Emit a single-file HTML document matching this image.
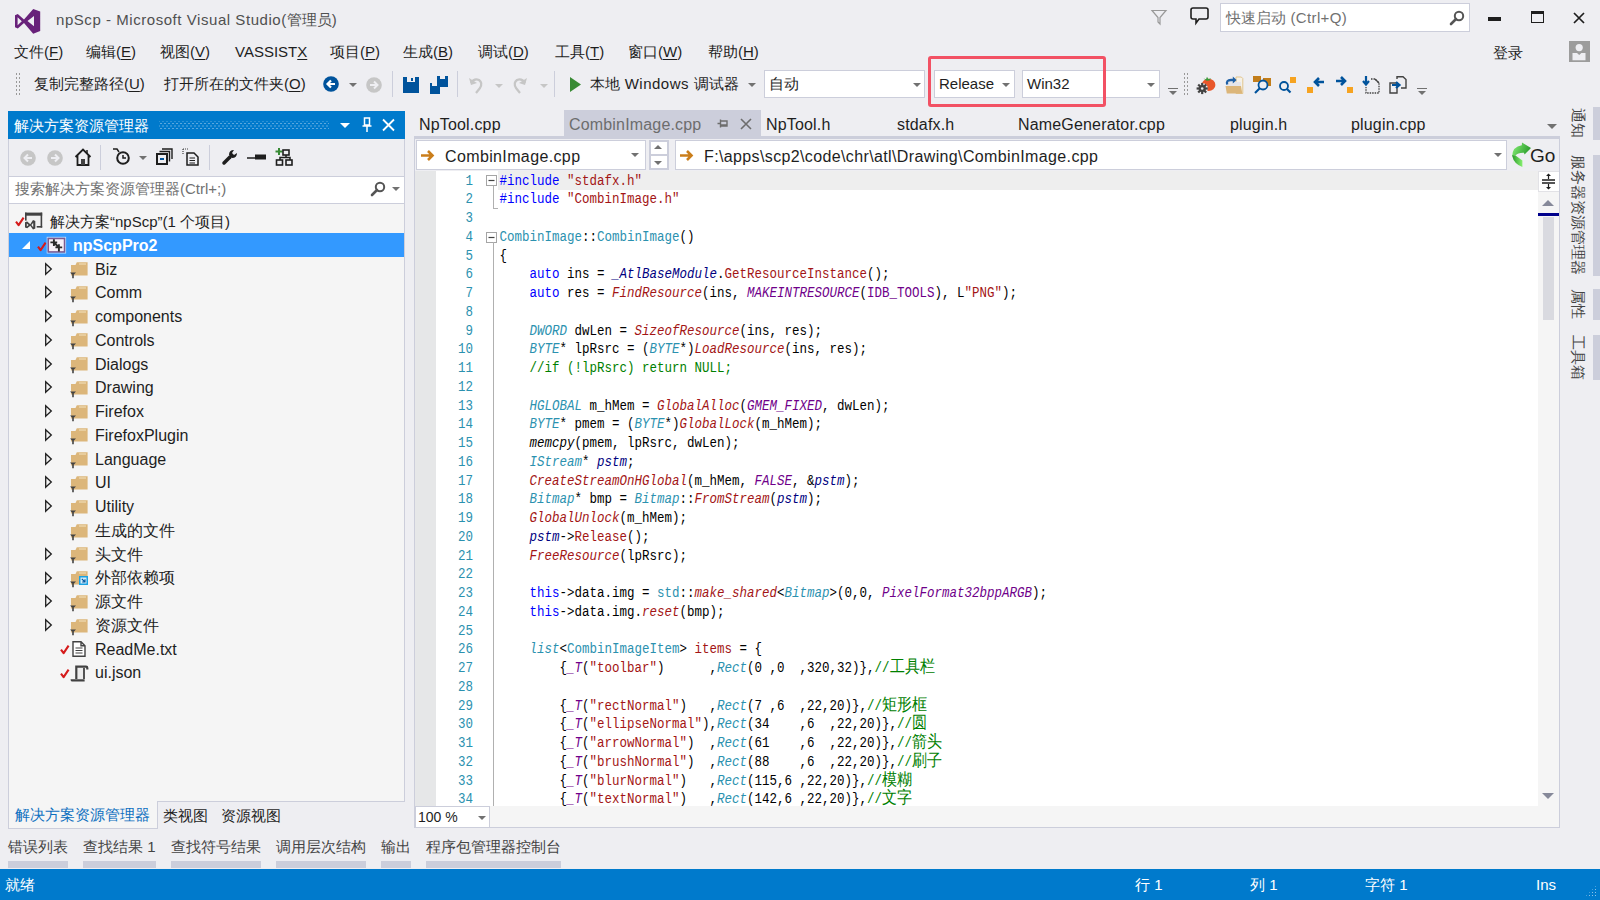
<!DOCTYPE html>
<html><head><meta charset="utf-8">
<style>
*{margin:0;padding:0;box-sizing:border-box}
html,body{width:1600px;height:900px;overflow:hidden;background:#EEEEF2;font-family:"Liberation Sans",sans-serif;color:#1E1E1E}
.a{position:absolute;white-space:nowrap}
.m{position:absolute;top:42px;font-size:15px;line-height:20px;white-space:nowrap}
.u{text-decoration:underline;text-underline-offset:2px}
.tb{position:absolute;top:74px;font-size:15px;line-height:20px;white-space:nowrap}
.sep{position:absolute;width:1px;background:#CCCEDB}
.dd{position:absolute;width:0;height:0;border-left:4px solid transparent;border-right:4px solid transparent;border-top:4px solid #717171}
.grip{position:absolute;width:6px;background-image:radial-gradient(circle,#999 0.8px,transparent 1px);background-size:3px 4px}
.box{position:absolute;background:#fff;border:1px solid #CCCEDB}
svg{position:absolute;overflow:visible}
</style><style>
.tr{position:absolute;font-size:16px;line-height:23.76px;white-space:nowrap;color:#1E1E1E}
.dt{top:114.5px;font-size:16px;letter-spacing:0.17px;line-height:20px;color:#1E1E1E}
.nv{top:146.5px;font-size:16px;letter-spacing:0.37px;line-height:20px;color:#1E1E1E}
.vt{writing-mode:vertical-rl;text-orientation:sideways;font-size:15px;line-height:20px;color:#444}
.ln{left:436px;top:170.6px;width:37px;text-align:right;font-family:"Liberation Mono",monospace;font-size:12.5px;line-height:18.755px;color:#2B91AF}
.code{left:499.5px;top:170.6px;font-family:"Liberation Mono",monospace;font-size:12.5px;line-height:18.755px;color:#000}
.cl{position:relative;height:18.755px;white-space:pre;transform:translateY(0.6px) scaleY(1.13);transform-origin:0 3px}
.ln div{height:18.755px;transform:translateY(0.6px) scaleY(1.13);transform-origin:0 3px}
.cj{font-weight:normal;font-size:15px;font-family:"Liberation Sans",sans-serif}
.code i{position:absolute;top:0;font-style:normal}
.code i.cj{line-height:14.95px;top:0}
.w{display:inline-block;inline-size:1em;text-align:center;font-weight:inherit;text-decoration:inherit}
.k{color:#0000FF}.s{color:#A31515}.t{color:#2B91AF}.ti{color:#2B91AF;font-style:italic!important}
.f{color:#A31515;font-style:italic!important}.fr{color:#A31515}.mc{color:#6F008A;font-style:italic!important}.mr{color:#6F008A}
.vi{color:#000080;font-style:italic!important}.c{color:#008000}.ni{font-style:italic!important}
</style>
</head><body>
<!-- ===== title bar ===== -->
<svg style="left:0;top:0" width="50" height="40" viewBox="0 0 50 40"><path d="M15 15.2 L17.8 14 L24 19.5 L33.2 9 L40.2 11.6 V31 L33.2 33.8 L24 23 L17.8 28.5 L15 27.2 Z M17.6 17.2 V25.2 L21.8 21.2 Z M34 16 V26.2 L27.5 21.1 Z" fill="#68217A" fill-rule="evenodd"/></svg>
<div class="a" style="left:56px;top:10px;font-size:15px;line-height:20px;color:#505050;letter-spacing:0.55px">npScp - Microsoft Visual Studio(<b class="w">管</b><b class="w">理</b><b class="w">员</b>)</div>
<svg style="left:1151px;top:9px" width="16" height="16" viewBox="0 0 16 16"><path d="M1 1.5 L15 1.5 L9 8.5 L9 15 L7 13 L7 8.5 Z" fill="none" stroke="#999" stroke-width="1.2"/></svg>
<svg style="left:1190px;top:7px" width="19" height="18" viewBox="0 0 19 18"><path d="M3 1 H16 Q18 1 18 3 V10 Q18 12 16 12 H9 L6 16 V12 H3 Q1 12 1 10 V3 Q1 1 3 1 Z" fill="none" stroke="#1E1E1E" stroke-width="1.6"/></svg>
<div class="box" style="left:1220px;top:3px;width:250px;height:29px"></div>
<div class="a" style="left:1226px;top:8px;font-size:15px;line-height:20px;color:#717171;letter-spacing:0.35px"><b class="w">快</b><b class="w">速</b><b class="w">启</b><b class="w">动</b> (Ctrl+Q)</div>
<svg style="left:1449px;top:10px" width="16" height="16" viewBox="0 0 16 16"><circle cx="10" cy="6" r="4.2" fill="none" stroke="#555" stroke-width="2"/><path d="M7 9 L2 14" stroke="#555" stroke-width="2.6" stroke-linecap="round"/></svg>
<div class="a" style="left:1488px;top:17px;width:13px;height:4px;background:#1E1E1E"></div>
<div class="a" style="left:1531px;top:11px;width:13px;height:12px;border:1.5px solid #1E1E1E;border-top-width:3px"></div>
<svg style="left:1573px;top:12px" width="12" height="12" viewBox="0 0 12 12"><path d="M1 1 L11 11 M11 1 L1 11" stroke="#1E1E1E" stroke-width="1.7"/></svg>
<!-- ===== menu ===== -->
<div class="m" style="left:14px"><b class="w">文</b><b class="w">件</b>(<span class="u">F</span>)</div>
<div class="m" style="left:86px"><b class="w">编</b><b class="w">辑</b>(<span class="u">E</span>)</div>
<div class="m" style="left:160px"><b class="w">视</b><b class="w">图</b>(<span class="u">V</span>)</div>
<div class="m" style="left:235px">VASSIST<span class="u">X</span></div>
<div class="m" style="left:330px"><b class="w">项</b><b class="w">目</b>(<span class="u">P</span>)</div>
<div class="m" style="left:403px"><b class="w">生</b><b class="w">成</b>(<span class="u">B</span>)</div>
<div class="m" style="left:478px"><b class="w">调</b><b class="w">试</b>(<span class="u">D</span>)</div>
<div class="m" style="left:555px"><b class="w">工</b><b class="w">具</b>(<span class="u">T</span>)</div>
<div class="m" style="left:628px"><b class="w">窗</b><b class="w">口</b>(<span class="u">W</span>)</div>
<div class="m" style="left:708px"><b class="w">帮</b><b class="w">助</b>(<span class="u">H</span>)</div>
<div class="m" style="left:1493px;top:43px"><b class="w">登</b><b class="w">录</b></div>
<div class="a" style="left:1569px;top:41px;width:21px;height:21px;background:#9C9C9C"></div>
<svg style="left:1569px;top:41px" width="21" height="21" viewBox="0 0 21 21"><circle cx="10.2" cy="6.6" r="3.6" fill="#EEEEF2"/><path d="M3.5 12 H8 L10.2 14 L12.4 12 H16.5 V19.2 H3.5 Z" fill="#EEEEF2"/></svg>
<!-- ===== toolbar ===== -->
<div class="grip" style="left:15px;top:72px;height:25px"></div>
<div class="tb" style="left:34px"><b class="w">复</b><b class="w">制</b><b class="w">完</b><b class="w">整</b><b class="w">路</b><b class="w">径</b>(<span class="u">U</span>)</div>
<div class="tb" style="left:164px"><b class="w">打</b><b class="w">开</b><b class="w">所</b><b class="w">在</b><b class="w">的</b><b class="w">文</b><b class="w">件</b><b class="w">夹</b>(<span class="u">O</span>)</div>
<svg style="left:323px;top:76px" width="16" height="16" viewBox="0 0 16 16"><circle cx="8" cy="8" r="7.8" fill="#00539C"/><path d="M12 8 H5 M8 4.5 L4.5 8 L8 11.5" stroke="#fff" stroke-width="2.2" fill="none"/></svg>
<div class="dd" style="left:349px;top:83px"></div>
<svg style="left:366px;top:77px" width="16" height="16" viewBox="0 0 16 16"><circle cx="8" cy="8" r="7.8" fill="#C6C6C6"/><path d="M4 8 H11 M8 4.5 L11.5 8 L8 11.5" stroke="#EEEEF2" stroke-width="2" fill="none"/></svg>
<div class="sep" style="left:392px;top:71px;height:26px"></div>
<svg style="left:403px;top:77px" width="16" height="16" viewBox="0 0 16 16"><path d="M0 0 H16 V16 H0 Z" fill="#00539C"/><rect x="4" y="0" width="8" height="5" fill="#EEEEF2"/><rect x="8" y="1" width="2" height="3" fill="#00539C"/></svg>
<svg style="left:430px;top:76px" width="18" height="18" viewBox="0 0 18 18"><path d="M0 7 H10 V18 H0 Z" fill="#00539C"/><rect x="2" y="7" width="5" height="3" fill="#EEEEF2"/><path d="M7 0 H18 V11 H10 V7 H7 Z" fill="#00539C"/><rect x="10" y="0" width="5" height="3" fill="#EEEEF2"/></svg>
<div class="sep" style="left:457px;top:71px;height:26px"></div>
<svg style="left:468px;top:76px" width="16" height="18" viewBox="0 0 16 18"><path d="M3 7 Q6 2 11 4 Q15 7 12 12 L8 17" stroke="#C6C6C6" stroke-width="2.2" fill="none"/><path d="M1 2 L3 9 L9 7 Z" fill="#C6C6C6"/></svg>
<div class="dd" style="left:495px;top:84px;border-top-color:#C6C6C6"></div>
<svg style="left:512px;top:76px" width="16" height="18" viewBox="0 0 16 18"><path d="M13 7 Q10 2 5 4 Q1 7 4 12 L8 17" stroke="#C6C6C6" stroke-width="2.2" fill="none"/><path d="M15 2 L13 9 L7 7 Z" fill="#C6C6C6"/></svg>
<div class="dd" style="left:540px;top:84px;border-top-color:#C6C6C6"></div>
<div class="sep" style="left:554px;top:71px;height:26px"></div>
<svg style="left:570px;top:77px" width="11" height="15" viewBox="0 0 11 15"><path d="M0 0 L11 7.5 L0 15 Z" fill="#388A34"/></svg>
<div class="tb" style="left:590px;letter-spacing:0.5px"><b class="w">本</b><b class="w">地</b> Windows <b class="w">调</b><b class="w">试</b><b class="w">器</b></div>
<div class="dd" style="left:748px;top:83px"></div>
<div class="box" style="left:764px;top:70px;width:161px;height:28px"></div>
<div class="tb" style="left:769px"><b class="w">自</b><b class="w">动</b></div>
<div class="dd" style="left:913px;top:83px"></div>
<div class="box" style="left:934px;top:70px;width:81px;height:28px"></div>
<div class="tb" style="left:939px">Release</div>
<div class="dd" style="left:1002px;top:83px"></div>
<div class="box" style="left:1022px;top:70px;width:138px;height:28px"></div>
<div class="tb" style="left:1027px">Win32</div>
<div class="dd" style="left:1147px;top:83px"></div>
<div class="a" style="left:928px;top:56px;width:178px;height:51px;border:3px solid #F25164;border-radius:3px"></div>
<svg style="left:1168px;top:88px" width="10" height="8" viewBox="0 0 10 8"><path d="M0 0.5 H10" stroke="#717171" stroke-width="1"/><path d="M1 3 H9 L5 7 Z" fill="#717171"/></svg>
<div class="grip" style="left:1183px;top:72px;height:25px"></div>
<!-- right toolbar icons -->
<svg style="left:1197px;top:76px" width="20" height="18" viewBox="0 0 20 18"><ellipse cx="11.6" cy="8.9" rx="6.8" ry="6.1" fill="#E8562A"/><path d="M6.5 2.5 L9 3.2 L10 0.8 L11.3 3 L14 2.2 L12.5 4.6 L9.5 4.8 Z" fill="#3A9A3A"/><circle cx="5.2" cy="12.5" r="5.6" fill="#EEEEF2"/><rect x="4.1" y="6.9" width="2.2" height="3" fill="#424242" transform="rotate(0 5.2 12.5)"/><rect x="4.1" y="6.9" width="2.2" height="3" fill="#424242" transform="rotate(45 5.2 12.5)"/><rect x="4.1" y="6.9" width="2.2" height="3" fill="#424242" transform="rotate(90 5.2 12.5)"/><rect x="4.1" y="6.9" width="2.2" height="3" fill="#424242" transform="rotate(135 5.2 12.5)"/><rect x="4.1" y="6.9" width="2.2" height="3" fill="#424242" transform="rotate(180 5.2 12.5)"/><rect x="4.1" y="6.9" width="2.2" height="3" fill="#424242" transform="rotate(225 5.2 12.5)"/><rect x="4.1" y="6.9" width="2.2" height="3" fill="#424242" transform="rotate(270 5.2 12.5)"/><rect x="4.1" y="6.9" width="2.2" height="3" fill="#424242" transform="rotate(315 5.2 12.5)"/><circle cx="5.2" cy="12.5" r="3.6" fill="#424242"/><circle cx="5.2" cy="12.5" r="1.3" fill="#EEEEF2"/></svg>
<svg style="left:1225px;top:76px" width="19" height="18" viewBox="0 0 19 18"><path d="M11 1 H16.3 L17.8 2.5 V17.5 H11 Z" fill="#F6F1E7" stroke="#E2C58E" stroke-width="1"/><rect x="2" y="6" width="14" height="4.5" fill="#E6E6EA"/><path d="M0.5 10 H16 L17.3 17.5 H1.8 Z" fill="#DCB67A"/><path d="M2.2 8.5 Q0.8 4 6 4 H8.5" stroke="#1E5FA5" stroke-width="2.3" fill="none"/><path d="M7.8 0.6 L11.6 4 L7.8 7.4 Z" fill="#1E5FA5"/></svg>
<svg style="left:1253px;top:76px" width="18" height="18" viewBox="0 0 18 18"><rect x="0" y="0" width="8" height="6" fill="#C27D1A"/><rect x="10" y="2" width="8" height="8" fill="#C27D1A"/><circle cx="10" cy="9" r="4.5" fill="#EEEEF2" stroke="#00539C" stroke-width="1.8"/><path d="M7 12 L2 17" stroke="#00539C" stroke-width="2.2"/></svg>
<svg style="left:1278px;top:77px" width="18" height="17" viewBox="0 0 18 17"><rect x="12" y="0" width="6" height="6" fill="#F6A321"/><circle cx="6" cy="9" r="4" fill="none" stroke="#00539C" stroke-width="1.8"/><path d="M9 12 L12.5 15.5" stroke="#00539C" stroke-width="2.2"/></svg>
<svg style="left:1307px;top:76px" width="18" height="18" viewBox="0 0 18 18"><rect x="0" y="11" width="6" height="6" fill="#F6A321"/><path d="M17 6 H9 M12 2 L8 6 L12 10" stroke="#00539C" stroke-width="2.6" fill="none"/></svg>
<svg style="left:1335px;top:76px" width="18" height="18" viewBox="0 0 18 18"><rect x="12" y="11" width="6" height="6" fill="#F6A321"/><path d="M1 5 H9 M6 1 L10 5 L6 9" stroke="#00539C" stroke-width="2.6" fill="none"/></svg>
<svg style="left:1362px;top:76px" width="18" height="18" viewBox="0 0 18 18"><path d="M4 0 V8 M1 5 L4 8.5 L7 5" stroke="#00539C" stroke-width="2.2" fill="none"/><path d="M9 3 H13 L17 7 V17 H4 V11" fill="none" stroke="#424242" stroke-width="1.3" stroke-dasharray="1.5 1"/><path d="M13 3 L17 7" stroke="#424242" stroke-width="1.3"/></svg>
<svg style="left:1389px;top:76px" width="18" height="18" viewBox="0 0 18 18"><path d="M8 3 V0.7 H14 L17 3.5 V12 H12" fill="none" stroke="#424242" stroke-width="1.4"/><path d="M1 7 H8 V17 H1 Z" fill="none" stroke="#424242" stroke-width="1.4"/><path d="M3 9 H10 M7 6 L10.5 9 L7 12" stroke="#00539C" stroke-width="2.2" fill="none"/></svg>
<svg style="left:1417px;top:88px" width="10" height="8" viewBox="0 0 10 8"><path d="M0 0.5 H10" stroke="#717171" stroke-width="1"/><path d="M1 3 H9 L5 7 Z" fill="#717171"/></svg>

<!-- ===== left panel: solution explorer ===== -->
<div class="a" style="left:8px;top:111px;width:397px;height:691px;background:#F5F5F5;border:1px solid #CCCEDB;border-top:none"></div>
<div class="a" style="left:8px;top:111px;width:397px;height:28px;background:#007ACC"></div>
<div class="a" style="left:14px;top:116px;font-size:15px;line-height:20px;color:#fff"><b class="w">解</b><b class="w">决</b><b class="w">方</b><b class="w">案</b><b class="w">资</b><b class="w">源</b><b class="w">管</b><b class="w">理</b><b class="w">器</b></div>
<div class="a" style="left:159px;top:121px;width:170px;height:8px;background-image:radial-gradient(circle,#5AA7DE 0.75px,transparent 1.05px),radial-gradient(circle,#5AA7DE 0.75px,transparent 1.05px);background-size:4px 5px;background-position:0 0,2px 2.5px"></div>
<div class="dd" style="left:340px;top:123px;border-left-width:5px;border-right-width:5px;border-top:5px solid #fff"></div>
<svg style="left:362px;top:117px" width="10" height="16" viewBox="0 0 10 16"><path d="M2.5 1 H7.5 V8 H2.5 Z M0.5 9 H9.5 M5 9 V15" stroke="#fff" stroke-width="1.5" fill="none"/></svg>
<svg style="left:382px;top:119px" width="13" height="12" viewBox="0 0 13 12"><path d="M1 0.5 L12 11.5 M12 0.5 L1 11.5" stroke="#fff" stroke-width="1.8"/></svg>
<div class="a" style="left:9px;top:139px;width:395px;height:37px;background:#EEEEF2"></div>
<svg style="left:20px;top:150px" width="16" height="16" viewBox="0 0 16 16"><circle cx="8" cy="8" r="7.8" fill="#C6C6C6"/><path d="M12 8 H5 M8 4.5 L4.5 8 L8 11.5" stroke="#EEEEF2" stroke-width="2" fill="none"/></svg>
<svg style="left:47px;top:150px" width="16" height="16" viewBox="0 0 16 16"><circle cx="8" cy="8" r="7.8" fill="#C6C6C6"/><path d="M4 8 H11 M8 4.5 L11.5 8 L8 11.5" stroke="#EEEEF2" stroke-width="2" fill="none"/></svg>
<svg style="left:74px;top:148px" width="18" height="18" viewBox="0 0 18 18"><path d="M1.5 9 L9 1.5 L16.5 9 M3.5 7.5 V17 H14.5 V7.5" stroke="#1E1E1E" stroke-width="1.8" fill="none"/><rect x="7" y="11" width="4" height="6" fill="#424242"/><path d="M13 2 V5" stroke="#1E1E1E" stroke-width="1.5"/></svg>
<div class="sep" style="left:100px;top:145px;height:25px"></div>
<svg style="left:113px;top:148px" width="18" height="17" viewBox="0 0 18 17"><circle cx="10" cy="10" r="5.8" fill="none" stroke="#1E1E1E" stroke-width="2"/><path d="M10 7 V10 H13" stroke="#1E1E1E" stroke-width="1.5" fill="none"/><path d="M0 1 H4 L6 4" stroke="#1E1E1E" stroke-width="1.5" fill="none"/></svg>
<div class="dd" style="left:139px;top:156px"></div>
<svg style="left:156px;top:148px" width="17" height="17" viewBox="0 0 17 17"><path d="M6 1 H16 V11 M3.5 3.5 H13.5 V13.5" stroke="#1E1E1E" stroke-width="1.4" fill="none"/><rect x="1" y="6" width="10" height="10" fill="none" stroke="#1E1E1E" stroke-width="2"/><rect x="4" y="10" width="4" height="2" fill="#00539C"/></svg>
<svg style="left:182px;top:148px" width="18" height="18" viewBox="0 0 18 18"><path d="M1 1 V6 M1 1 H6" stroke="#424242" stroke-width="1.2" stroke-dasharray="1 1" fill="none"/><path d="M5 5 H12 L16 9 V17 H5 Z" fill="none" stroke="#1E1E1E" stroke-width="1.5"/><path d="M7.5 10 H13 M7.5 12.5 H13 M7.5 15 H13" stroke="#1E1E1E" stroke-width="1.2"/></svg>
<div class="sep" style="left:209px;top:145px;height:25px"></div>
<svg style="left:222px;top:149px" width="16" height="16" viewBox="0 0 16 16"><path d="M2 14 L8 8" stroke="#1E1E1E" stroke-width="3.5" stroke-linecap="round"/><path d="M7 6 Q7 1 12 1 L10 4 L12 6 L15 4 Q15 9 10 9 Z" fill="#1E1E1E"/></svg>
<svg style="left:247px;top:154px" width="19" height="7" viewBox="0 0 19 7"><path d="M0 4 H19" stroke="#1E1E1E" stroke-width="1.5"/><rect x="8" y="0.5" width="11" height="5" fill="#1E1E1E"/></svg>
<svg style="left:275px;top:148px" width="18" height="18" viewBox="0 0 18 18"><path d="M4 0 V7 M0.5 3.5 H7.5" stroke="#388A34" stroke-width="2"/><rect x="8" y="2" width="6" height="5" fill="none" stroke="#1E1E1E" stroke-width="1.6"/><path d="M11 7 V9.5 M5 12 V9.5 H15 V12" stroke="#1E1E1E" stroke-width="1.5" fill="none"/><rect x="1.5" y="12" width="6" height="5" fill="none" stroke="#1E1E1E" stroke-width="1.6"/><rect x="11" y="12" width="6" height="5" fill="none" stroke="#1E1E1E" stroke-width="1.6"/></svg>
<div class="box" style="left:9px;top:176px;width:395px;height:28px;border-left:none;border-right:none"></div>
<div class="a" style="left:15px;top:179px;font-size:15px;line-height:20px;color:#717171"><b class="w">搜</b><b class="w">索</b><b class="w">解</b><b class="w">决</b><b class="w">方</b><b class="w">案</b><b class="w">资</b><b class="w">源</b><b class="w">管</b><b class="w">理</b><b class="w">器</b>(Ctrl+;)</div>
<svg style="left:370px;top:181px" width="16" height="16" viewBox="0 0 16 16"><circle cx="10" cy="6" r="4.2" fill="none" stroke="#555" stroke-width="2"/><path d="M7 9 L2 14" stroke="#555" stroke-width="2.6" stroke-linecap="round"/></svg>
<div class="dd" style="left:392px;top:187px"></div>
<svg style="left:16px;top:217.1px" width="8" height="9" viewBox="0 0 8 9"><path d="M0 4.6 L2.6 8.2 L7.6 0.6" stroke="#D51B1B" stroke-width="2.1" fill="none" stroke-linejoin="round"/></svg>
<svg style="left:25px;top:212.1px" width="18" height="18" viewBox="0 0 18 18"><rect x="0.7" y="2" width="15.8" height="12.8" fill="#F0F0F0"/><rect x="0" y="0.6" width="17.2" height="3.1" fill="#424242"/><rect x="0" y="0.6" width="1.6" height="8" fill="#424242"/><rect x="15.6" y="0.6" width="1.6" height="15" fill="#424242"/><rect x="11.7" y="14" width="5.5" height="1.6" fill="#424242"/><path d="M0 10.3 L2.2 9.6 L5.3 12.2 L8 8 L10.3 8.9 V16.6 L8 17.4 L5.3 13.8 L2.2 16.2 L0 15.5 Z M1.8 11.6 V14.4 L3.6 13 Z M8.2 10.8 V15.2 L6.4 13 Z" fill="#424242" fill-rule="evenodd"/></svg>
<div class="tr" style="left:50px;top:210.0px;font-size:15px"><b class="w">解</b><b class="w">决</b><b class="w">方</b><b class="w">案</b>“npScp”(1 <b class="w">个</b><b class="w">项</b><b class="w">目</b>)</div>
<div class="a" style="left:9px;top:233.0px;width:395px;height:24px;background:#3399FF"></div>
<svg style="left:22px;top:240.8px" width="8" height="8" viewBox="0 0 8 8"><path d="M8 0 V8 H0 Z" fill="#fff"/></svg>
<svg style="left:38px;top:241.8px" width="8" height="9" viewBox="0 0 8 9"><path d="M0 4.6 L2.6 8.2 L7.6 0.6" stroke="#D51B1B" stroke-width="2.1" fill="none" stroke-linejoin="round"/></svg>
<svg style="left:47px;top:235.8px" width="19" height="18" viewBox="0 0 19 18"><rect x="0.2" y="1.3" width="18.4" height="15.7" fill="none" stroke="#BFDFFF" stroke-width="1"/><rect x="1.3" y="2.5" width="16.2" height="13.4" fill="#F7F0F7" stroke="#7F5B91" stroke-width="1.5"/><path d="M6.9 3.2 V10 M3.4 6.4 H10.2 M11.9 8.2 V15.4 M8.4 11.4 H15.2 M7 6.5 L12 11.5" stroke="#2A2A2A" stroke-width="1.9"/></svg>
<div class="tr" style="left:73px;top:233.8px;color:#fff;font-weight:bold">npScpPro2</div>
<svg style="left:45px;top:262.6px" width="7" height="12" viewBox="0 0 7 12"><path d="M0.7 0.8 L6.3 6 L0.7 11.2 Z" fill="none" stroke="#1E1E1E" stroke-width="1.3"/></svg>
<svg style="left:70px;top:261.1px" width="18" height="18" viewBox="0 0 18 18"><path d="M1 4 H5.5 L6.8 1.2 H17.6 V14.5 H1 Z" fill="#DCB67A"/><path d="M9 3 H16" stroke="#F3E3C0" stroke-width="1"/><path d="M0 11.6 H6 L3 14.6 Z" fill="#424242"/><path d="M3 14 V17.3" stroke="#424242" stroke-width="1.6"/></svg>
<div class="tr" style="left:95px;top:257.5px">Biz</div>
<svg style="left:45px;top:286.4px" width="7" height="12" viewBox="0 0 7 12"><path d="M0.7 0.8 L6.3 6 L0.7 11.2 Z" fill="none" stroke="#1E1E1E" stroke-width="1.3"/></svg>
<svg style="left:70px;top:284.9px" width="18" height="18" viewBox="0 0 18 18"><path d="M1 4 H5.5 L6.8 1.2 H17.6 V14.5 H1 Z" fill="#DCB67A"/><path d="M9 3 H16" stroke="#F3E3C0" stroke-width="1"/><path d="M0 11.6 H6 L3 14.6 Z" fill="#424242"/><path d="M3 14 V17.3" stroke="#424242" stroke-width="1.6"/></svg>
<div class="tr" style="left:95px;top:281.3px">Comm</div>
<svg style="left:45px;top:310.1px" width="7" height="12" viewBox="0 0 7 12"><path d="M0.7 0.8 L6.3 6 L0.7 11.2 Z" fill="none" stroke="#1E1E1E" stroke-width="1.3"/></svg>
<svg style="left:70px;top:308.6px" width="18" height="18" viewBox="0 0 18 18"><path d="M1 4 H5.5 L6.8 1.2 H17.6 V14.5 H1 Z" fill="#DCB67A"/><path d="M9 3 H16" stroke="#F3E3C0" stroke-width="1"/><path d="M0 11.6 H6 L3 14.6 Z" fill="#424242"/><path d="M3 14 V17.3" stroke="#424242" stroke-width="1.6"/></svg>
<div class="tr" style="left:95px;top:305.0px">components</div>
<svg style="left:45px;top:333.9px" width="7" height="12" viewBox="0 0 7 12"><path d="M0.7 0.8 L6.3 6 L0.7 11.2 Z" fill="none" stroke="#1E1E1E" stroke-width="1.3"/></svg>
<svg style="left:70px;top:332.4px" width="18" height="18" viewBox="0 0 18 18"><path d="M1 4 H5.5 L6.8 1.2 H17.6 V14.5 H1 Z" fill="#DCB67A"/><path d="M9 3 H16" stroke="#F3E3C0" stroke-width="1"/><path d="M0 11.6 H6 L3 14.6 Z" fill="#424242"/><path d="M3 14 V17.3" stroke="#424242" stroke-width="1.6"/></svg>
<div class="tr" style="left:95px;top:328.8px">Controls</div>
<svg style="left:45px;top:357.6px" width="7" height="12" viewBox="0 0 7 12"><path d="M0.7 0.8 L6.3 6 L0.7 11.2 Z" fill="none" stroke="#1E1E1E" stroke-width="1.3"/></svg>
<svg style="left:70px;top:356.1px" width="18" height="18" viewBox="0 0 18 18"><path d="M1 4 H5.5 L6.8 1.2 H17.6 V14.5 H1 Z" fill="#DCB67A"/><path d="M9 3 H16" stroke="#F3E3C0" stroke-width="1"/><path d="M0 11.6 H6 L3 14.6 Z" fill="#424242"/><path d="M3 14 V17.3" stroke="#424242" stroke-width="1.6"/></svg>
<div class="tr" style="left:95px;top:352.6px">Dialogs</div>
<svg style="left:45px;top:381.4px" width="7" height="12" viewBox="0 0 7 12"><path d="M0.7 0.8 L6.3 6 L0.7 11.2 Z" fill="none" stroke="#1E1E1E" stroke-width="1.3"/></svg>
<svg style="left:70px;top:379.9px" width="18" height="18" viewBox="0 0 18 18"><path d="M1 4 H5.5 L6.8 1.2 H17.6 V14.5 H1 Z" fill="#DCB67A"/><path d="M9 3 H16" stroke="#F3E3C0" stroke-width="1"/><path d="M0 11.6 H6 L3 14.6 Z" fill="#424242"/><path d="M3 14 V17.3" stroke="#424242" stroke-width="1.6"/></svg>
<div class="tr" style="left:95px;top:376.3px">Drawing</div>
<svg style="left:45px;top:405.2px" width="7" height="12" viewBox="0 0 7 12"><path d="M0.7 0.8 L6.3 6 L0.7 11.2 Z" fill="none" stroke="#1E1E1E" stroke-width="1.3"/></svg>
<svg style="left:70px;top:403.7px" width="18" height="18" viewBox="0 0 18 18"><path d="M1 4 H5.5 L6.8 1.2 H17.6 V14.5 H1 Z" fill="#DCB67A"/><path d="M9 3 H16" stroke="#F3E3C0" stroke-width="1"/><path d="M0 11.6 H6 L3 14.6 Z" fill="#424242"/><path d="M3 14 V17.3" stroke="#424242" stroke-width="1.6"/></svg>
<div class="tr" style="left:95px;top:400.1px">Firefox</div>
<svg style="left:45px;top:428.9px" width="7" height="12" viewBox="0 0 7 12"><path d="M0.7 0.8 L6.3 6 L0.7 11.2 Z" fill="none" stroke="#1E1E1E" stroke-width="1.3"/></svg>
<svg style="left:70px;top:427.4px" width="18" height="18" viewBox="0 0 18 18"><path d="M1 4 H5.5 L6.8 1.2 H17.6 V14.5 H1 Z" fill="#DCB67A"/><path d="M9 3 H16" stroke="#F3E3C0" stroke-width="1"/><path d="M0 11.6 H6 L3 14.6 Z" fill="#424242"/><path d="M3 14 V17.3" stroke="#424242" stroke-width="1.6"/></svg>
<div class="tr" style="left:95px;top:423.8px">FirefoxPlugin</div>
<svg style="left:45px;top:452.7px" width="7" height="12" viewBox="0 0 7 12"><path d="M0.7 0.8 L6.3 6 L0.7 11.2 Z" fill="none" stroke="#1E1E1E" stroke-width="1.3"/></svg>
<svg style="left:70px;top:451.2px" width="18" height="18" viewBox="0 0 18 18"><path d="M1 4 H5.5 L6.8 1.2 H17.6 V14.5 H1 Z" fill="#DCB67A"/><path d="M9 3 H16" stroke="#F3E3C0" stroke-width="1"/><path d="M0 11.6 H6 L3 14.6 Z" fill="#424242"/><path d="M3 14 V17.3" stroke="#424242" stroke-width="1.6"/></svg>
<div class="tr" style="left:95px;top:447.6px">Language</div>
<svg style="left:45px;top:476.4px" width="7" height="12" viewBox="0 0 7 12"><path d="M0.7 0.8 L6.3 6 L0.7 11.2 Z" fill="none" stroke="#1E1E1E" stroke-width="1.3"/></svg>
<svg style="left:70px;top:474.9px" width="18" height="18" viewBox="0 0 18 18"><path d="M1 4 H5.5 L6.8 1.2 H17.6 V14.5 H1 Z" fill="#DCB67A"/><path d="M9 3 H16" stroke="#F3E3C0" stroke-width="1"/><path d="M0 11.6 H6 L3 14.6 Z" fill="#424242"/><path d="M3 14 V17.3" stroke="#424242" stroke-width="1.6"/></svg>
<div class="tr" style="left:95px;top:471.4px">UI</div>
<svg style="left:45px;top:500.2px" width="7" height="12" viewBox="0 0 7 12"><path d="M0.7 0.8 L6.3 6 L0.7 11.2 Z" fill="none" stroke="#1E1E1E" stroke-width="1.3"/></svg>
<svg style="left:70px;top:498.7px" width="18" height="18" viewBox="0 0 18 18"><path d="M1 4 H5.5 L6.8 1.2 H17.6 V14.5 H1 Z" fill="#DCB67A"/><path d="M9 3 H16" stroke="#F3E3C0" stroke-width="1"/><path d="M0 11.6 H6 L3 14.6 Z" fill="#424242"/><path d="M3 14 V17.3" stroke="#424242" stroke-width="1.6"/></svg>
<div class="tr" style="left:95px;top:495.1px">Utility</div>
<svg style="left:70px;top:522.5px" width="18" height="18" viewBox="0 0 18 18"><path d="M1 4 H5.5 L6.8 1.2 H17.6 V14.5 H1 Z" fill="#DCB67A"/><path d="M9 3 H16" stroke="#F3E3C0" stroke-width="1"/><path d="M0 11.6 H6 L3 14.6 Z" fill="#424242"/><path d="M3 14 V17.3" stroke="#424242" stroke-width="1.6"/></svg>
<div class="tr" style="left:95px;top:518.9px"><b class="w">生</b><b class="w">成</b><b class="w">的</b><b class="w">文</b><b class="w">件</b></div>
<svg style="left:45px;top:547.7px" width="7" height="12" viewBox="0 0 7 12"><path d="M0.7 0.8 L6.3 6 L0.7 11.2 Z" fill="none" stroke="#1E1E1E" stroke-width="1.3"/></svg>
<svg style="left:70px;top:546.2px" width="18" height="18" viewBox="0 0 18 18"><path d="M1 4 H5.5 L6.8 1.2 H17.6 V14.5 H1 Z" fill="#DCB67A"/><path d="M9 3 H16" stroke="#F3E3C0" stroke-width="1"/><path d="M0 11.6 H6 L3 14.6 Z" fill="#424242"/><path d="M3 14 V17.3" stroke="#424242" stroke-width="1.6"/></svg>
<div class="tr" style="left:95px;top:542.6px"><b class="w">头</b><b class="w">文</b><b class="w">件</b></div>
<svg style="left:45px;top:571.5px" width="7" height="12" viewBox="0 0 7 12"><path d="M0.7 0.8 L6.3 6 L0.7 11.2 Z" fill="none" stroke="#1E1E1E" stroke-width="1.3"/></svg>
<svg style="left:70px;top:570.0px" width="18" height="18" viewBox="0 0 18 18"><path d="M1 4 H5.5 L6.8 1.2 H17.6 V14.5 H1 Z" fill="#DCB67A"/><path d="M9 3 H16" stroke="#F3E3C0" stroke-width="1"/><path d="M0 11.6 H6 L3 14.6 Z" fill="#424242"/><path d="M3 14 V17.3" stroke="#424242" stroke-width="1.6"/></svg>
<svg style="left:79px;top:576.0px" width="9" height="9" viewBox="0 0 9 9"><rect x="0.75" y="0.75" width="7.5" height="7.5" fill="#D5ECFA" stroke="#1BA1E2" stroke-width="1.5"/><path d="M2.8 2.8 L6 6 M6 3.2 V6 H3.2" stroke="#00539C" stroke-width="1.1" fill="none"/></svg>
<div class="tr" style="left:95px;top:566.4px"><b class="w">外</b><b class="w">部</b><b class="w">依</b><b class="w">赖</b><b class="w">项</b></div>
<svg style="left:45px;top:595.2px" width="7" height="12" viewBox="0 0 7 12"><path d="M0.7 0.8 L6.3 6 L0.7 11.2 Z" fill="none" stroke="#1E1E1E" stroke-width="1.3"/></svg>
<svg style="left:70px;top:593.7px" width="18" height="18" viewBox="0 0 18 18"><path d="M1 4 H5.5 L6.8 1.2 H17.6 V14.5 H1 Z" fill="#DCB67A"/><path d="M9 3 H16" stroke="#F3E3C0" stroke-width="1"/><path d="M0 11.6 H6 L3 14.6 Z" fill="#424242"/><path d="M3 14 V17.3" stroke="#424242" stroke-width="1.6"/></svg>
<div class="tr" style="left:95px;top:590.2px"><b class="w">源</b><b class="w">文</b><b class="w">件</b></div>
<svg style="left:45px;top:619.0px" width="7" height="12" viewBox="0 0 7 12"><path d="M0.7 0.8 L6.3 6 L0.7 11.2 Z" fill="none" stroke="#1E1E1E" stroke-width="1.3"/></svg>
<svg style="left:70px;top:617.5px" width="18" height="18" viewBox="0 0 18 18"><path d="M1 4 H5.5 L6.8 1.2 H17.6 V14.5 H1 Z" fill="#DCB67A"/><path d="M9 3 H16" stroke="#F3E3C0" stroke-width="1"/><path d="M0 11.6 H6 L3 14.6 Z" fill="#424242"/><path d="M3 14 V17.3" stroke="#424242" stroke-width="1.6"/></svg>
<div class="tr" style="left:95px;top:613.9px"><b class="w">资</b><b class="w">源</b><b class="w">文</b><b class="w">件</b></div>
<svg style="left:61px;top:644.8px" width="8" height="9" viewBox="0 0 8 9"><path d="M0 4.6 L2.6 8.2 L7.6 0.6" stroke="#D51B1B" stroke-width="2.1" fill="none" stroke-linejoin="round"/></svg>
<svg style="left:72px;top:640.8px" width="14" height="16" viewBox="0 0 14 16"><path d="M1 0.8 H9 L13 4.8 V15.2 H1 Z M9 0.8 V4.8 H13" fill="#fff" stroke="#424242" stroke-width="1.4"/><path d="M3.5 7 H10.5 M3.5 9.5 H10.5 M3.5 12 H10.5" stroke="#424242" stroke-width="1.2"/></svg>
<div class="tr" style="left:95px;top:637.7px">ReadMe.txt</div>
<svg style="left:61px;top:668.5px" width="8" height="9" viewBox="0 0 8 9"><path d="M0 4.6 L2.6 8.2 L7.6 0.6" stroke="#D51B1B" stroke-width="2.1" fill="none" stroke-linejoin="round"/></svg>
<svg style="left:70px;top:663.5px" width="18" height="18" viewBox="0 0 18 18"><rect x="6" y="3" width="8" height="12" fill="#ECECEC"/><path d="M6.3 15 V2.7 H16 Q17.3 2.7 17.3 4 V5.5" stroke="#424242" stroke-width="2.2" fill="none"/><path d="M14 4 V15" stroke="#424242" stroke-width="1.8"/><path d="M0.6 15.2 H14.6 V17.6 H2.4 Q0.6 17.6 0.6 16 Z" fill="#424242"/></svg>
<div class="tr" style="left:95px;top:661.4px">ui.json</div>
<!-- left panel bottom tabs -->
<div class="a" style="left:157px;top:801px;width:248px;height:1px;background:#CCCEDB"></div>
<div class="a" style="left:8px;top:801px;width:150px;height:28px;background:#F5F5F5;border:1px solid #CCCEDB;border-top:none"></div>
<div class="a" style="left:15px;top:805px;font-size:15px;line-height:20px;color:#0E70C0"><b class="w">解</b><b class="w">决</b><b class="w">方</b><b class="w">案</b><b class="w">资</b><b class="w">源</b><b class="w">管</b><b class="w">理</b><b class="w">器</b></div>
<div class="a" style="left:163px;top:806px;font-size:15px;line-height:20px;color:#1E1E1E"><b class="w">类</b><b class="w">视</b><b class="w">图</b></div>
<div class="a" style="left:221px;top:806px;font-size:15px;line-height:20px;color:#1E1E1E"><b class="w">资</b><b class="w">源</b><b class="w">视</b><b class="w">图</b></div>
<!-- bottom output tabs -->
<div class="a" style="left:8px;top:837px;font-size:15px;line-height:20px;color:#444"><b class="w">错</b><b class="w">误</b><b class="w">列</b><b class="w">表</b></div>
<div class="a" style="left:83px;top:837px;font-size:15px;line-height:20px;color:#444"><b class="w">查</b><b class="w">找</b><b class="w">结</b><b class="w">果</b> 1</div>
<div class="a" style="left:171px;top:837px;font-size:15px;line-height:20px;color:#444"><b class="w">查</b><b class="w">找</b><b class="w">符</b><b class="w">号</b><b class="w">结</b><b class="w">果</b></div>
<div class="a" style="left:276px;top:837px;font-size:15px;line-height:20px;color:#444"><b class="w">调</b><b class="w">用</b><b class="w">层</b><b class="w">次</b><b class="w">结</b><b class="w">构</b></div>
<div class="a" style="left:381px;top:837px;font-size:15px;line-height:20px;color:#444"><b class="w">输</b><b class="w">出</b></div>
<div class="a" style="left:426px;top:837px;font-size:15px;line-height:20px;color:#444"><b class="w">程</b><b class="w">序</b><b class="w">包</b><b class="w">管</b><b class="w">理</b><b class="w">器</b><b class="w">控</b><b class="w">制</b><b class="w">台</b></div>
<div class="a" style="left:8px;top:861px;width:60px;height:7px;background:#CCCEDB"></div>
<div class="a" style="left:83px;top:861px;width:73px;height:7px;background:#CCCEDB"></div>
<div class="a" style="left:171px;top:861px;width:90px;height:7px;background:#CCCEDB"></div>
<div class="a" style="left:276px;top:861px;width:90px;height:7px;background:#CCCEDB"></div>
<div class="a" style="left:381px;top:861px;width:30px;height:7px;background:#CCCEDB"></div>
<div class="a" style="left:426px;top:861px;width:135px;height:7px;background:#CCCEDB"></div>
<!-- status bar -->
<div class="a" style="left:0;top:869px;width:1600px;height:31px;background:#007ACC"></div>
<div class="a" style="left:5px;top:875px;font-size:15px;line-height:20px;color:#fff"><b class="w">就</b><b class="w">绪</b></div>
<div class="a" style="left:1135px;top:875px;font-size:15px;line-height:20px;color:#fff"><b class="w">行</b> 1</div>
<div class="a" style="left:1250px;top:875px;font-size:15px;line-height:20px;color:#fff"><b class="w">列</b> 1</div>
<div class="a" style="left:1365px;top:875px;font-size:15px;line-height:20px;color:#fff"><b class="w">字</b><b class="w">符</b> 1</div>
<div class="a" style="left:1536px;top:875px;font-size:15px;line-height:20px;color:#fff">Ins</div>
<div class="a" style="left:1585px;top:885px;width:12px;height:12px;background-image:radial-gradient(circle,#8EC2E8 0.7px,transparent 0.9px);background-size:3px 3px;clip-path:polygon(100% 0,100% 100%,0 100%)"></div>
<!-- right sidebar -->
<div class="a" style="left:1593px;top:107px;width:7px;height:33px;background:#CCCEDB"></div>
<div class="a" style="left:1593px;top:155px;width:7px;height:121px;background:#CCCEDB"></div>
<div class="a" style="left:1593px;top:289px;width:7px;height:31px;background:#CCCEDB"></div>
<div class="a" style="left:1593px;top:335px;width:7px;height:45px;background:#CCCEDB"></div>
<div class="a vt" style="left:1568px;top:108px"><b class="w">通</b><b class="w">知</b></div>
<div class="a vt" style="left:1568px;top:155px"><b class="w">服</b><b class="w">务</b><b class="w">器</b><b class="w">资</b><b class="w">源</b><b class="w">管</b><b class="w">理</b><b class="w">器</b></div>
<div class="a vt" style="left:1568px;top:289px"><b class="w">属</b><b class="w">性</b></div>
<div class="a vt" style="left:1568px;top:335px"><b class="w">工</b><b class="w">具</b><b class="w">箱</b></div>

<!-- ===== editor ===== -->
<div class="a" style="left:564px;top:110px;width:197px;height:26px;background:#CCCEDB"></div>
<div class="a dt" style="left:419px">NpTool.cpp</div>
<div class="a dt" style="left:569px;color:#6D6D6D">CombinImage.cpp</div>
<svg style="left:717px;top:118px" width="11" height="11" viewBox="0 0 11 11"><path d="M0.5 5.5 H3.5 M3.5 1.5 V9.5 M3.5 3 H10 V8 H3.5 M3.5 7 H10" stroke="#6D6D6D" stroke-width="1.4" fill="none"/></svg>
<svg style="left:740px;top:118px" width="12" height="12" viewBox="0 0 12 12"><path d="M1 1 L11 11 M11 1 L1 11" stroke="#6D6D6D" stroke-width="1.6"/></svg>
<div class="a dt" style="left:766px">NpTool.h</div>
<div class="a dt" style="left:897px">stdafx.h</div>
<div class="a dt" style="left:1018px">NameGenerator.cpp</div>
<div class="a dt" style="left:1230px">plugin.h</div>
<div class="a dt" style="left:1351px">plugin.cpp</div>
<div class="dd" style="left:1547px;top:124px;border-left-width:5px;border-right-width:5px;border-top-width:5px"></div>
<div class="a" style="left:414px;top:136px;width:1146px;height:692px;background:#F5F5F5;border:1px solid #CCCEDB;border-top:3px solid #CCCEDB"></div>
<div class="a" style="left:415px;top:139px;width:1144px;height:32px;background:#EEEEF2"></div>
<div class="box" style="left:416px;top:140px;width:230px;height:30px"></div>
<svg style="left:421px;top:150px" width="14" height="11" viewBox="0 0 14 11"><path d="M0 5.5 H11 M7 1 L11.5 5.5 L7 10" stroke="#CA7E1B" stroke-width="2.6" fill="none"/></svg>
<div class="a nv" style="left:445px">CombinImage.cpp</div>
<div class="dd" style="left:631px;top:153px"></div>
<div class="a" style="left:649px;top:140px;width:20px;height:30px;background:#fff;border:2px solid #CCCEDB"></div>
<div class="a" style="left:651px;top:154px;width:16px;height:2px;background:#CCCEDB"></div>
<div class="a" style="left:654px;top:145px;width:0;height:0;border-left:4px solid transparent;border-right:4px solid transparent;border-bottom:4px solid #717171"></div>
<div class="a" style="left:654px;top:161px;width:0;height:0;border-left:4px solid transparent;border-right:4px solid transparent;border-top:4px solid #717171"></div>
<div class="box" style="left:675px;top:140px;width:832px;height:30px"></div>
<svg style="left:680px;top:150px" width="14" height="11" viewBox="0 0 14 11"><path d="M0 5.5 H11 M7 1 L11.5 5.5 L7 10" stroke="#CA7E1B" stroke-width="2.6" fill="none"/></svg>
<div class="a nv" style="left:704px">F:\apps\scp2\code\chr\atl\Drawing\CombinImage.cpp</div>
<div class="dd" style="left:1494px;top:153px"></div>
<svg style="left:1505px;top:138px" width="30" height="32" viewBox="0 0 30 32"><defs><linearGradient id="gg" x1="0" y1="0" x2="1" y2="0.3"><stop offset="0" stop-color="#8BF27A"/><stop offset="1" stop-color="#2F9F2F"/></linearGradient><linearGradient id="gg2" x1="0" y1="0" x2="1" y2="0"><stop offset="0" stop-color="#2A9A2A"/><stop offset="1" stop-color="#86F070"/></linearGradient></defs><path d="M17 4.5 L26 10 L19.5 16.5 L19 14.8 Q13 14.5 10.5 17.5 L7.2 18 Q7.5 8.5 16.8 7.2 Z" fill="url(#gg)"/><path d="M7.2 17.2 L10.5 17.5 L17.4 22.6 V29 Q9 26 7.2 18 Z" fill="url(#gg2)"/></svg>
<div class="a" style="left:1530px;top:144px;font-size:19px;line-height:24px;color:#1E1E1E">Go</div>
<!-- code area -->
<div class="a" style="left:415px;top:171px;width:1123px;height:635px;background:#fff"></div>
<div class="a" style="left:415px;top:171px;width:21px;height:635px;background:#E6E7E8"></div>
<div class="a" style="left:498px;top:171.3px;width:1040px;height:18.4px;background:#EEEEEE"></div>
<div class="a" style="left:1538px;top:171px;width:21px;height:635px;background:#F5F5F5"></div>
<div class="a" style="left:1538px;top:171px;width:21px;height:21px;background:#fff;border:1px solid #E2E2E6;border-right:none"></div>
<svg style="left:1542px;top:173px" width="13" height="17" viewBox="0 0 13 17"><path d="M0 7 H13 M0 10 H13" stroke="#1E1E1E" stroke-width="1.3"/><path d="M6.5 1 V6 M6.5 11 V16" stroke="#1E1E1E" stroke-width="1.2"/><path d="M4 3 L6.5 0.5 L9 3 Z M4 14 L6.5 16.5 L9 14 Z" fill="#1E1E1E"/></svg>
<div class="a" style="left:1542px;top:200px;width:0;height:0;border-left:6px solid transparent;border-right:6px solid transparent;border-bottom:6px solid #868999"></div>
<div class="a" style="left:1538px;top:213px;width:21px;height:3px;background:#00008B"></div>
<div class="a" style="left:1543px;top:217px;width:11px;height:103px;background:#D9DAE0"></div>
<div class="a" style="left:1542px;top:793px;width:0;height:0;border-left:6px solid transparent;border-right:6px solid transparent;border-top:6px solid #868999"></div>
<div class="a ln"><div>1</div><div>2</div><div>3</div><div>4</div><div>5</div><div>6</div><div>7</div><div>8</div><div>9</div><div>10</div><div>11</div><div>12</div><div>13</div><div>14</div><div>15</div><div>16</div><div>17</div><div>18</div><div>19</div><div>20</div><div>21</div><div>22</div><div>23</div><div>24</div><div>25</div><div>26</div><div>27</div><div>28</div><div>29</div><div>30</div><div>31</div><div>32</div><div>33</div><div>34</div></div>
<svg style="left:486px;top:175px" width="11" height="11" viewBox="0 0 11 11"><rect x="0.5" y="0.5" width="10" height="10" fill="#fff" stroke="#A5A5A5"/><path d="M2.5 5.5 H8.5" stroke="#424242" stroke-width="1.2"/></svg>
<div class="a" style="left:492.5px;top:186px;width:1.3px;height:22.5px;background:#B0B0B0"></div>
<div class="a" style="left:492.5px;top:207.5px;width:5px;height:1.3px;background:#B0B0B0"></div>
<svg style="left:486px;top:231.5px" width="11" height="11" viewBox="0 0 11 11"><rect x="0.5" y="0.5" width="10" height="10" fill="#fff" stroke="#A5A5A5"/><path d="M2.5 5.5 H8.5" stroke="#424242" stroke-width="1.2"/></svg>
<div class="a" style="left:492.5px;top:242px;width:1.3px;height:564px;background:#B0B0B0"></div>
<div class="a code"><div class="cl"><i class="k" style="left:0px">#include</i><i class="s" style="left:67.5px">"stdafx.h"</i></div>
<div class="cl"><i class="k" style="left:0px">#include</i><i class="s" style="left:67.5px">"CombinImage.h"</i></div>
<div class="cl"></div>
<div class="cl"><i class="t" style="left:0px">CombinImage</i><i class="n" style="left:82.5px">::</i><i class="t" style="left:97.5px">CombinImage</i><i class="n" style="left:180px">()</i></div>
<div class="cl"><i class="n" style="left:0px">{</i></div>
<div class="cl"><i class="k" style="left:30px">auto</i><i class="n" style="left:67.5px">ins</i><i class="n" style="left:97.5px">=</i><i class="vi" style="left:112.5px">_AtlBaseModule</i><i class="n" style="left:217.5px">.</i><i class="fr" style="left:225px">GetResourceInstance</i><i class="n" style="left:367.5px">();</i></div>
<div class="cl"><i class="k" style="left:30px">auto</i><i class="n" style="left:67.5px">res</i><i class="n" style="left:97.5px">=</i><i class="f" style="left:112.5px">FindResource</i><i class="n" style="left:202.5px">(ins,</i><i class="mc" style="left:247.5px">MAKEINTRESOURCE</i><i class="n" style="left:360px">(</i><i class="mr" style="left:367.5px">IDB_TOOLS</i><i class="n" style="left:435px">),</i><i class="n" style="left:457.5px">L</i><i class="s" style="left:465px">"PNG"</i><i class="n" style="left:502.5px">);</i></div>
<div class="cl"></div>
<div class="cl"><i class="ti" style="left:30px">DWORD</i><i class="n" style="left:75px">dwLen</i><i class="n" style="left:120px">=</i><i class="f" style="left:135px">SizeofResource</i><i class="n" style="left:240px">(ins,</i><i class="n" style="left:285px">res);</i></div>
<div class="cl"><i class="ti" style="left:30px">BYTE</i><i class="n" style="left:60px">*</i><i class="n" style="left:75px">lpRsrc</i><i class="n" style="left:127.5px">=</i><i class="n" style="left:142.5px">(</i><i class="ti" style="left:150px">BYTE</i><i class="n" style="left:180px">*)</i><i class="f" style="left:195px">LoadResource</i><i class="n" style="left:285px">(ins,</i><i class="n" style="left:330px">res);</i></div>
<div class="cl"><i class="c" style="left:30px">//if</i><i class="c" style="left:67.5px">(!lpRsrc)</i><i class="c" style="left:142.5px">return</i><i class="c" style="left:195px">NULL;</i></div>
<div class="cl"></div>
<div class="cl"><i class="ti" style="left:30px">HGLOBAL</i><i class="n" style="left:90px">m_hMem</i><i class="n" style="left:142.5px">=</i><i class="f" style="left:157.5px">GlobalAlloc</i><i class="n" style="left:240px">(</i><i class="mc" style="left:247.5px">GMEM_FIXED</i><i class="n" style="left:322.5px">,</i><i class="n" style="left:337.5px">dwLen);</i></div>
<div class="cl"><i class="ti" style="left:30px">BYTE</i><i class="n" style="left:60px">*</i><i class="n" style="left:75px">pmem</i><i class="n" style="left:112.5px">=</i><i class="n" style="left:127.5px">(</i><i class="ti" style="left:135px">BYTE</i><i class="n" style="left:165px">*)</i><i class="f" style="left:180px">GlobalLock</i><i class="n" style="left:255px">(m_hMem);</i></div>
<div class="cl"><i class="ni" style="left:30px">memcpy</i><i class="n" style="left:75px">(pmem,</i><i class="n" style="left:127.5px">lpRsrc,</i><i class="n" style="left:187.5px">dwLen);</i></div>
<div class="cl"><i class="ti" style="left:30px">IStream</i><i class="n" style="left:82.5px">*</i><i class="vi" style="left:97.5px">pstm</i><i class="n" style="left:127.5px">;</i></div>
<div class="cl"><i class="f" style="left:30px">CreateStreamOnHGlobal</i><i class="n" style="left:187.5px">(m_hMem,</i><i class="mc" style="left:255px">FALSE</i><i class="n" style="left:292.5px">,</i><i class="n" style="left:307.5px">&amp;</i><i class="vi" style="left:315px">pstm</i><i class="n" style="left:345px">);</i></div>
<div class="cl"><i class="ti" style="left:30px">Bitmap</i><i class="n" style="left:75px">*</i><i class="n" style="left:90px">bmp</i><i class="n" style="left:120px">=</i><i class="ti" style="left:135px">Bitmap</i><i class="n" style="left:180px">::</i><i class="f" style="left:195px">FromStream</i><i class="n" style="left:270px">(</i><i class="vi" style="left:277.5px">pstm</i><i class="n" style="left:307.5px">);</i></div>
<div class="cl"><i class="f" style="left:30px">GlobalUnlock</i><i class="n" style="left:120px">(m_hMem);</i></div>
<div class="cl"><i class="vi" style="left:30px">pstm</i><i class="n" style="left:60px">-&gt;</i><i class="fr" style="left:75px">Release</i><i class="n" style="left:127.5px">();</i></div>
<div class="cl"><i class="f" style="left:30px">FreeResource</i><i class="n" style="left:120px">(lpRsrc);</i></div>
<div class="cl"></div>
<div class="cl"><i class="k" style="left:30px">this</i><i class="n" style="left:60px">-&gt;data.img</i><i class="n" style="left:142.5px">=</i><i class="t" style="left:157.5px">std</i><i class="n" style="left:180px">::</i><i class="f" style="left:195px">make_shared</i><i class="n" style="left:277.5px">&lt;</i><i class="ti" style="left:285px">Bitmap</i><i class="n" style="left:330px">&gt;(0,0,</i><i class="mc" style="left:382.5px">PixelFormat32bppARGB</i><i class="n" style="left:532.5px">);</i></div>
<div class="cl"><i class="k" style="left:30px">this</i><i class="n" style="left:60px">-&gt;data.img.</i><i class="f" style="left:142.5px">reset</i><i class="n" style="left:180px">(bmp);</i></div>
<div class="cl"></div>
<div class="cl"><i class="ti" style="left:30px">list</i><i class="n" style="left:60px">&lt;</i><i class="t" style="left:67.5px">CombinImageItem</i><i class="n" style="left:180px">&gt;</i><i class="fr" style="left:195px">items</i><i class="n" style="left:240px">=</i><i class="n" style="left:255px">{</i></div>
<div class="cl"><i class="n" style="left:60px">{</i><i class="mc" style="left:67.5px">_T</i><i class="n" style="left:82.5px">(</i><i class="s" style="left:90px">"toolbar"</i><i class="n" style="left:157.5px">)</i><i class="n" style="left:210px">,</i><i class="ti" style="left:217.5px">Rect</i><i class="n" style="left:247.5px">(0</i><i class="n" style="left:270px">,0</i><i class="n" style="left:300px">,320,32)},</i><i class="c" style="left:375px">//</i><i class="c cj" style="left:390px"><b class="w">工</b><b class="w">具</b><b class="w">栏</b></i></div>
<div class="cl"></div>
<div class="cl"><i class="n" style="left:60px">{</i><i class="mc" style="left:67.5px">_T</i><i class="n" style="left:82.5px">(</i><i class="s" style="left:90px">"rectNormal"</i><i class="n" style="left:180px">)</i><i class="n" style="left:210px">,</i><i class="ti" style="left:217.5px">Rect</i><i class="n" style="left:247.5px">(7</i><i class="n" style="left:270px">,6</i><i class="n" style="left:300px">,22,20)},</i><i class="c" style="left:367.5px">//</i><i class="c cj" style="left:382.5px"><b class="w">矩</b><b class="w">形</b><b class="w">框</b></i></div>
<div class="cl"><i class="n" style="left:60px">{</i><i class="mc" style="left:67.5px">_T</i><i class="n" style="left:82.5px">(</i><i class="s" style="left:90px">"ellipseNormal"</i><i class="n" style="left:202.5px">),</i><i class="ti" style="left:217.5px">Rect</i><i class="n" style="left:247.5px">(34</i><i class="n" style="left:300px">,6</i><i class="n" style="left:330px">,22,20)},</i><i class="c" style="left:397.5px">//</i><i class="c cj" style="left:412.5px"><b class="w">圆</b></i></div>
<div class="cl"><i class="n" style="left:60px">{</i><i class="mc" style="left:67.5px">_T</i><i class="n" style="left:82.5px">(</i><i class="s" style="left:90px">"arrowNormal"</i><i class="n" style="left:187.5px">)</i><i class="n" style="left:210px">,</i><i class="ti" style="left:217.5px">Rect</i><i class="n" style="left:247.5px">(61</i><i class="n" style="left:300px">,6</i><i class="n" style="left:330px">,22,20)},</i><i class="c" style="left:397.5px">//</i><i class="c cj" style="left:412.5px"><b class="w">箭</b><b class="w">头</b></i></div>
<div class="cl"><i class="n" style="left:60px">{</i><i class="mc" style="left:67.5px">_T</i><i class="n" style="left:82.5px">(</i><i class="s" style="left:90px">"brushNormal"</i><i class="n" style="left:187.5px">)</i><i class="n" style="left:210px">,</i><i class="ti" style="left:217.5px">Rect</i><i class="n" style="left:247.5px">(88</i><i class="n" style="left:300px">,6</i><i class="n" style="left:330px">,22,20)},</i><i class="c" style="left:397.5px">//</i><i class="c cj" style="left:412.5px"><b class="w">刷</b><b class="w">子</b></i></div>
<div class="cl"><i class="n" style="left:60px">{</i><i class="mc" style="left:67.5px">_T</i><i class="n" style="left:82.5px">(</i><i class="s" style="left:90px">"blurNormal"</i><i class="n" style="left:180px">)</i><i class="n" style="left:210px">,</i><i class="ti" style="left:217.5px">Rect</i><i class="n" style="left:247.5px">(115,6</i><i class="n" style="left:300px">,22,20)},</i><i class="c" style="left:367.5px">//</i><i class="c cj" style="left:382.5px"><b class="w">模</b><b class="w">糊</b></i></div>
<div class="cl"><i class="n" style="left:60px">{</i><i class="mc" style="left:67.5px">_T</i><i class="n" style="left:82.5px">(</i><i class="s" style="left:90px">"textNormal"</i><i class="n" style="left:180px">)</i><i class="n" style="left:210px">,</i><i class="ti" style="left:217.5px">Rect</i><i class="n" style="left:247.5px">(142,6</i><i class="n" style="left:300px">,22,20)},</i><i class="c" style="left:367.5px">//</i><i class="c cj" style="left:382.5px"><b class="w">文</b><b class="w">字</b></i></div></div>
<!-- zoom bar -->
<div class="box" style="left:415px;top:806px;width:75px;height:22px;border-color:#CCCEDB"></div>
<div class="a" style="left:418px;top:808px;font-size:14px;line-height:18px;color:#1E1E1E">100 %</div>
<div class="dd" style="left:478px;top:816px"></div>
</body></html>
